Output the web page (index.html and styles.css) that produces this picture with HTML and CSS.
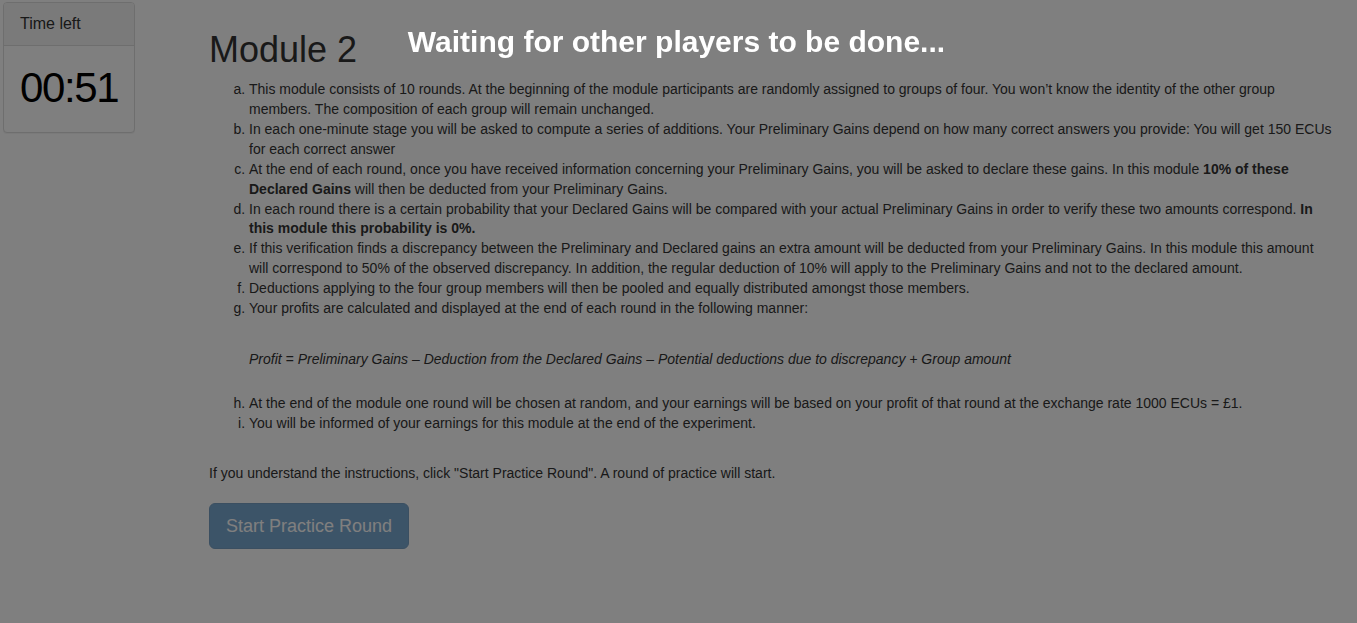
FILE: index.html
```html
<!DOCTYPE html>
<html lang="en">
<head>
<meta charset="utf-8">
<title>Module 2</title>
<link rel="stylesheet" href="styles.css">
</head>
<body>
<div class="page">
  <aside class="sidebar">
    <div class="panel">
      <div class="panel-heading">Time left</div>
      <div class="panel-body"><span class="timer">00:51</span></div>
    </div>
  </aside>
  <main class="main">
    <h1 class="title">Module 2</h1>
    <ol class="rules">
      <li>This module consists of 10 rounds. At the beginning of the module participants are randomly assigned to groups of four. You won’t know the identity of the other group members. The composition of each group will remain unchanged.</li>
      <li>In each one-minute stage you will be asked to compute a series of additions. Your Preliminary Gains depend on how many correct answers you provide: You will get 150 ECUs for each correct answer</li>
      <li>At the end of each round, once you have received information concerning your Preliminary Gains, you will be asked to declare these gains. In this module <b>10% of these Declared Gains</b> will then be deducted from your Preliminary Gains.</li>
      <li>In each round there is a certain probability that your Declared Gains will be compared with your actual Preliminary Gains in order to verify these two amounts correspond. <b>In this module this probability is 0%.</b></li>
      <li>If this verification finds a discrepancy between the Preliminary and Declared gains an extra amount will be deducted from your Preliminary Gains. In this module this amount will correspond to 50% of the observed discrepancy. In addition, the regular deduction of 10% will apply to the Preliminary Gains and not to the declared amount.</li>
      <li>Deductions applying to the four group members will then be pooled and equally distributed amongst those members.</li>
      <li>Your profits are calculated and displayed at the end of each round in the following manner:
        <p class="formula">Profit = Preliminary Gains – Deduction from the Declared Gains – Potential deductions due to discrepancy + Group amount</p>
      </li>
      <li>At the end of the module one round will be chosen at random, and your earnings will be based on your profit of that round at the exchange rate 1000 ECUs = £1.</li>
      <li>You will be informed of your earnings for this module at the end of the experiment.</li>
    </ol>
    <p class="note">If you understand the instructions, click "Start Practice Round". A round of practice will start.</p>
    <button class="btn" disabled>Start Practice Round</button>
  </main>
</div>
<div class="overlay">
  <div class="waiting">Waiting for other players to be done...</div>
</div>
</body>
</html>
```
FILE: styles.css
```css
html, body {
  margin: 0;
  padding: 0;
  background: #fff;
}
body {
  font-family: "Liberation Sans", Arial, sans-serif;
  font-size: 14px;
  line-height: 1.42857;
  color: #333;
}
.page {
  display: flex;
  align-items: flex-start;
}
.sidebar {
  width: 132px;
  margin: 2px 0 0 3px;
  flex: none;
}
.panel {
  border: 1px solid #ddd;
  border-radius: 4px;
  background: #fff;
  box-shadow: 0 1px 1px rgba(0,0,0,.05);
  height: 129px;
  display: flex;
  flex-direction: column;
}
.panel-heading {
  background: #f5f5f5;
  border-bottom: 1px solid #ddd;
  border-radius: 3px 3px 0 0;
  padding: 10px 16px;
  font-size: 16px;
  line-height: 22px;
  color: #333;
}
.panel-body {
  flex: 1;
  display: flex;
  align-items: center;
  padding: 0 16px;
}
.timer {
  font-size: 42px;
  letter-spacing: -1.4px;
  color: #000;
  line-height: 1;
  margin-top: -2px;
}
.main {
  flex: 1;
  margin: 0 23px 0 74px;
}
.title {
  font-size: 36px;
  font-weight: 400;
  line-height: 1.1;
  margin: 30px 0 10px;
  color: #333;
}
.rules {
  list-style: lower-alpha;
  padding-left: 40px;
  margin: 0 0 30px;
}
.formula {
  font-style: italic;
  margin: 31px 0 24px;
}
.note {
  margin: 0 0 19px;
}
.btn {
  font-family: "Liberation Sans", Arial, sans-serif;
  font-size: 18px;
  line-height: 24px;
  padding: 10px 16px;
  border: 1px solid #2e6da4;
  border-radius: 6px;
  background: #337ab7;
  color: #fff;
  opacity: .65;
  cursor: not-allowed;
}
.overlay {
  position: fixed;
  inset: 0;
  background: rgba(0,0,0,.5);
  z-index: 10;
}
.waiting {
  margin-top: 24px;
  padding-right: 4px;
  text-align: center;
  color: #fff;
  font-weight: 700;
  font-size: 30px;
  line-height: 36px;
}
```
